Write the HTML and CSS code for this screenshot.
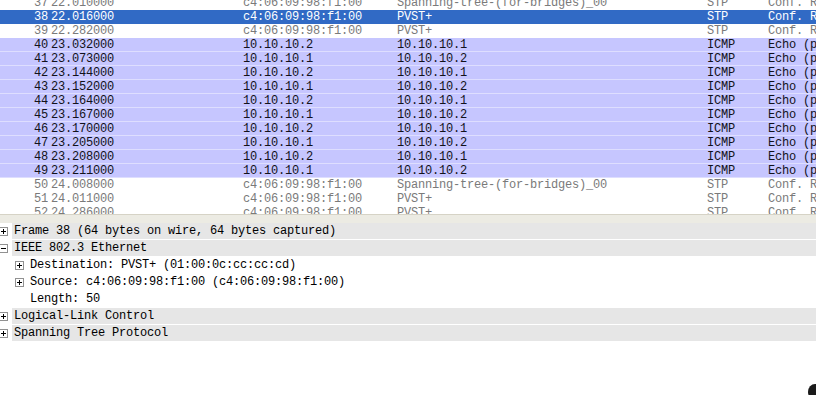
FILE: index.html
```html
<!DOCTYPE html>
<html lang="en">
<head>
    <meta charset="UTF-8">
    <meta name="viewport" content="width=device-width, initial-scale=1.0">
    <title>Capture - Packet List</title>
    <link rel="stylesheet" href="styles.css">
</head>
<body>
    <div class="packet-list">
        <div class="packet-rows">
            <div class="row row-stp"><span class="c-no">37</span><span>22.010000</span><span>c4:06:09:98:f1:00</span><span>Spanning-tree-(for-bridges)_00</span><span>STP</span><span>Conf. Root = 32768/1/c4:06:09:98:f1:00</span></div>
            <div class="row row-selected"><span class="c-no">38</span><span>22.016000</span><span>c4:06:09:98:f1:00</span><span>PVST+</span><span>STP</span><span>Conf. Root = 32768/1/c4:06:09:98:f1:00</span></div>
            <div class="row row-stp"><span class="c-no">39</span><span>22.282000</span><span>c4:06:09:98:f1:00</span><span>PVST+</span><span>STP</span><span>Conf. Root = 32768/1/c4:06:09:98:f1:00</span></div>
            <div class="row row-icmp"><span class="c-no">40</span><span>23.032000</span><span>10.10.10.2</span><span>10.10.10.1</span><span>ICMP</span><span>Echo (ping) request</span></div>
            <div class="row row-icmp"><span class="c-no">41</span><span>23.073000</span><span>10.10.10.1</span><span>10.10.10.2</span><span>ICMP</span><span>Echo (ping) reply</span></div>
            <div class="row row-icmp"><span class="c-no">42</span><span>23.144000</span><span>10.10.10.2</span><span>10.10.10.1</span><span>ICMP</span><span>Echo (ping) request</span></div>
            <div class="row row-icmp"><span class="c-no">43</span><span>23.152000</span><span>10.10.10.1</span><span>10.10.10.2</span><span>ICMP</span><span>Echo (ping) reply</span></div>
            <div class="row row-icmp"><span class="c-no">44</span><span>23.164000</span><span>10.10.10.2</span><span>10.10.10.1</span><span>ICMP</span><span>Echo (ping) request</span></div>
            <div class="row row-icmp"><span class="c-no">45</span><span>23.167000</span><span>10.10.10.1</span><span>10.10.10.2</span><span>ICMP</span><span>Echo (ping) reply</span></div>
            <div class="row row-icmp"><span class="c-no">46</span><span>23.170000</span><span>10.10.10.2</span><span>10.10.10.1</span><span>ICMP</span><span>Echo (ping) request</span></div>
            <div class="row row-icmp"><span class="c-no">47</span><span>23.205000</span><span>10.10.10.1</span><span>10.10.10.2</span><span>ICMP</span><span>Echo (ping) reply</span></div>
            <div class="row row-icmp"><span class="c-no">48</span><span>23.208000</span><span>10.10.10.2</span><span>10.10.10.1</span><span>ICMP</span><span>Echo (ping) request</span></div>
            <div class="row row-icmp"><span class="c-no">49</span><span>23.211000</span><span>10.10.10.1</span><span>10.10.10.2</span><span>ICMP</span><span>Echo (ping) reply</span></div>
            <div class="row row-stp"><span class="c-no">50</span><span>24.008000</span><span>c4:06:09:98:f1:00</span><span>Spanning-tree-(for-bridges)_00</span><span>STP</span><span>Conf. Root = 32768/1/c4:06:09:98:f1:00</span></div>
            <div class="row row-stp"><span class="c-no">51</span><span>24.011000</span><span>c4:06:09:98:f1:00</span><span>PVST+</span><span>STP</span><span>Conf. Root = 32768/1/c4:06:09:98:f1:00</span></div>
            <div class="row row-stp"><span class="c-no">52</span><span>24.286000</span><span>c4:06:09:98:f1:00</span><span>PVST+</span><span>STP</span><span>Conf. Root = 32768/1/c4:06:09:98:f1:00</span></div>
        </div>
    </div>

    <div class="splitter"></div>

    <div class="details">
        <div class="node node-top">
            <svg class="expander" viewBox="0 0 9 9"><rect x="0.5" y="0.5" width="8" height="8" fill="#fff" stroke="#919191"/><path d="M2 4.5h5M4.5 2v5" stroke="#000"/></svg>
            <span class="node-label">Frame 38 (64 bytes on wire, 64 bytes captured)</span>
        </div>
        <div class="node node-top">
            <svg class="expander" viewBox="0 0 9 9"><rect x="0.5" y="0.5" width="8" height="8" fill="#fff" stroke="#919191"/><path d="M2 4.5h5" stroke="#000"/></svg>
            <span class="node-label">IEEE 802.3 Ethernet</span>
        </div>
        <div class="node node-child">
            <svg class="expander" viewBox="0 0 9 9"><rect x="0.5" y="0.5" width="8" height="8" fill="#fff" stroke="#919191"/><path d="M2 4.5h5M4.5 2v5" stroke="#000"/></svg>
            <span class="node-label">Destination: PVST+ (01:00:0c:cc:cc:cd)</span>
        </div>
        <div class="node node-child">
            <svg class="expander" viewBox="0 0 9 9"><rect x="0.5" y="0.5" width="8" height="8" fill="#fff" stroke="#919191"/><path d="M2 4.5h5M4.5 2v5" stroke="#000"/></svg>
            <span class="node-label">Source: c4:06:09:98:f1:00 (c4:06:09:98:f1:00)</span>
        </div>
        <div class="node node-child node-leaf">
            <span class="node-label">Length: 50</span>
        </div>
        <div class="node node-top">
            <svg class="expander" viewBox="0 0 9 9"><rect x="0.5" y="0.5" width="8" height="8" fill="#fff" stroke="#919191"/><path d="M2 4.5h5M4.5 2v5" stroke="#000"/></svg>
            <span class="node-label">Logical-Link Control</span>
        </div>
        <div class="node node-top">
            <svg class="expander" viewBox="0 0 9 9"><rect x="0.5" y="0.5" width="8" height="8" fill="#fff" stroke="#919191"/><path d="M2 4.5h5M4.5 2v5" stroke="#000"/></svg>
            <span class="node-label">Spanning Tree Protocol</span>
        </div>
    </div>

    <div class="cursor-blob"></div>
</body>
</html>
```

FILE: styles.css
```css
* {
    margin: 0;
    padding: 0;
    box-sizing: border-box;
}

body {
    font-family: "Liberation Mono", "DejaVu Sans Mono", monospace;
    font-size: 12px;
    letter-spacing: -0.2px;
    background-color: #ffffff;
    color: #000000;
    width: 816px;
    height: 395px;
    overflow: hidden;
    position: relative;
}

/* Packet list pane */

.packet-list {
    height: 215px;
    overflow: hidden;
    border-bottom: 1px solid #d6d3c6;
}

.packet-rows {
    margin-top: -4px;
}

.row {
    display: grid;
    grid-template-columns: 48px 192px 154px 310px 61px 400px;
    height: 14px;
    line-height: 14px;
    white-space: nowrap;
}

.row span {
    padding-left: 3px;
    overflow: hidden;
}

.row .c-no {
    text-align: right;
    padding-left: 0;
}

.row-stp {
    color: #7a7a7a;
}

.row-selected {
    background-color: #316ac5;
    color: #ffffff;
}

.row-icmp {
    background-color: #c6c6ff;
    border-bottom: 1px solid #dedeff;
    color: #12121a;
}

/* Pane splitter */

.splitter {
    height: 8px;
    background-color: #ecebe3;
}

/* Packet details pane */

.node {
    display: flex;
    align-items: center;
    height: 17px;
    white-space: nowrap;
}

.node-top {
    border-bottom: 1px solid #ffffff;
}

.node-top .expander {
    margin-left: -1px;
    margin-right: 4px;
}

.node-top .node-label {
    flex: 1;
    height: 16px;
    line-height: 16px;
    padding-left: 2px;
    background-color: #e6e6e6;
}

.node-child {
    padding-left: 15px;
}

.node-child .expander {
    margin-right: 6px;
}

.node-child .node-label {
    line-height: 17px;
}

.node-leaf {
    padding-left: 30px;
}

.expander {
    width: 9px;
    height: 9px;
    flex: none;
}

.cursor-blob {
    position: absolute;
    left: 808px;
    top: 384px;
    width: 14px;
    height: 16px;
    border-radius: 50%;
    background-color: #1a1a1a;
}
```
